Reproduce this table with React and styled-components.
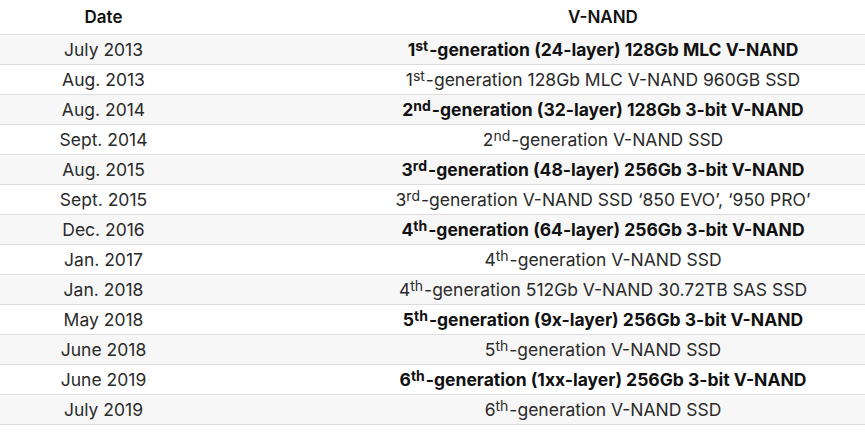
import React from 'react';
import styled, { createGlobalStyle } from 'styled-components';

const rows = [
  { date: 'July 2013', n: '1', sup: 'st', rest: '-generation (24-layer) 128Gb MLC V-NAND', bold: true },
  { date: 'Aug. 2013', n: '1', sup: 'st', rest: '-generation 128Gb MLC V-NAND 960GB SSD' },
  { date: 'Aug. 2014', n: '2', sup: 'nd', rest: '-generation (32-layer) 128Gb 3-bit V-NAND', bold: true },
  { date: 'Sept. 2014', n: '2', sup: 'nd', rest: '-generation V-NAND SSD' },
  { date: 'Aug. 2015', n: '3', sup: 'rd', rest: '-generation (48-layer) 256Gb 3-bit V-NAND', bold: true },
  { date: 'Sept. 2015', n: '3', sup: 'rd', rest: '-generation V-NAND SSD \u2018850 EVO\u2019, \u2018950 PRO\u2019' },
  { date: 'Dec. 2016', n: '4', sup: 'th', rest: '-generation (64-layer) 256Gb 3-bit V-NAND', bold: true },
  { date: 'Jan. 2017', n: '4', sup: 'th', rest: '-generation V-NAND SSD' },
  { date: 'Jan. 2018', n: '4', sup: 'th', rest: '-generation 512Gb V-NAND 30.72TB SAS SSD' },
  { date: 'May 2018', n: '5', sup: 'th', rest: '-generation (9x-layer) 256Gb 3-bit V-NAND', bold: true },
  { date: 'June 2018', n: '5', sup: 'th', rest: '-generation V-NAND SSD' },
  { date: 'June 2019', n: '6', sup: 'th', rest: '-generation (1xx-layer) 256Gb 3-bit V-NAND', bold: true },
  { date: 'July 2019', n: '6', sup: 'th', rest: '-generation V-NAND SSD' },
];

const GlobalStyle = createGlobalStyle`
  html, body {
    margin: 0;
    padding: 0;
    background: #fff;
    overflow: hidden;
  }
  body {
    font-family: Inter, "Noto Sans", sans-serif;
  }
`;

const Table = styled.div`
  width: 100%;
  display: grid;
  grid-template-columns: 207px 1fr;
`;

const HeadCell = styled.div`
  height: 34px;
  display: flex;
  align-items: center;
  justify-content: center;
  padding-left: ${(p) => (p.$wide ? '134px' : '0')};
  font-size: 17px;
  font-weight: 600;
  color: #111;
  border-bottom: 1px solid #dcdcdc;
`;

const Cell = styled.div`
  height: 29px;
  display: flex;
  align-items: center;
  justify-content: center;
  padding-left: ${(p) => (p.$wide ? '134px' : '0')};
  font-size: 17.5px;
  white-space: nowrap;
  font-weight: ${(p) => (p.$bold ? 700 : 400)};
  color: ${(p) => (p.$bold ? '#111' : '#2a2a2a')};
  background: ${(p) => (p.$striped ? '#f7f7f7' : '#fff')};
  border-bottom: 1px solid #dcdcdc;
`;

const Sup = styled.sup`
  font-size: 0.8em;
  line-height: 0;
  position: relative;
  top: -0.22em;
  margin-right: 1px;
`;

const App = () => {
  return (
    <>
      <GlobalStyle />
      <Table>
        <HeadCell>Date</HeadCell>
        <HeadCell $wide>V-NAND</HeadCell>
        {rows.map((r, i) => (
          <React.Fragment key={i}>
            <Cell $striped={i % 2 === 0}>{r.date}</Cell>
            <Cell $striped={i % 2 === 0} $bold={r.bold} $wide>
              {r.n}
              <Sup>{r.sup}</Sup>
              {r.rest}
            </Cell>
          </React.Fragment>
        ))}
      </Table>
    </>
  );
};

export default App;
